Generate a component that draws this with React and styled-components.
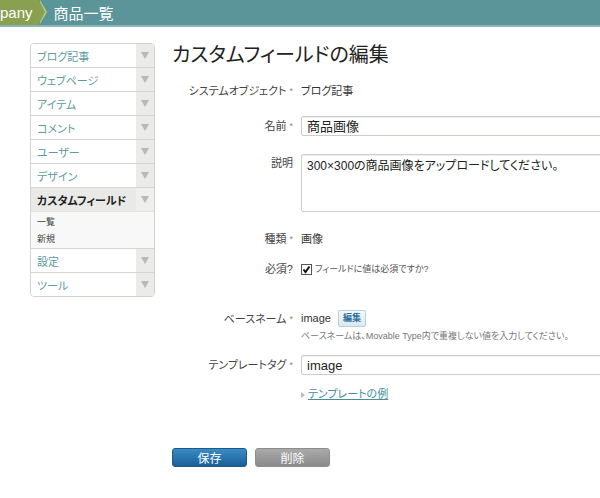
import React from 'react'
import styled, { createGlobalStyle } from 'styled-components'

const Global = createGlobalStyle`
  body {
    margin: 0;
    background: #fff;
    font-family: "Liberation Sans", "Noto Sans CJK JP", sans-serif;
    font-feature-settings: "palt";
    color: #333;
    overflow: hidden;
  }
`

const Page = styled.div`
  width: 600px;
  height: 498px;
  overflow: hidden;
`

const TopBar = styled.div`
  height: 25px;
  background: #5b9499;
  border-bottom: 2px solid #8bb5b8;
  display: flex;
  align-items: center;
`

const Crumb = styled.div`
  height: 25px;
  background: #88a04f;
  color: #fff;
  font-size: 15px;
  display: flex;
  align-items: center;
  position: relative;
  padding-right: 6px;
  &::after {
    content: '';
    position: absolute;
    right: -6px;
    top: 0;
    border-top: 12.5px solid transparent;
    border-bottom: 12.5px solid transparent;
    border-left: 6px solid #88a04f;
  }
  &::before {
    content: '';
    position: absolute;
    right: -8px;
    top: 0;
    border-top: 12.5px solid transparent;
    border-bottom: 12.5px solid transparent;
    border-left: 7px solid #b5c98c;
  }
`

const Current = styled.div`
  color: #fff;
  font-size: 15px;
  margin-left: 15px;
`

const Main = styled.div`
  display: flex;
  padding: 16px 0 0 30px;
`

const Side = styled.div`
  width: 123px;
  flex-shrink: 0;
  border: 1px solid #d4d2cc;
  border-radius: 4px;
  overflow: hidden;
  align-self: flex-start;
`

const Item = styled.div`
  display: flex;
  height: 23px;
  border-top: ${p => (p.first ? 'none' : '1px solid #d7d5d0')};
  background: ${p => (p.active ? '#e9e9e7' : '#fff')};
`

const ItemLabel = styled.div`
  flex: 1;
  display: flex;
  align-items: center;
  padding-left: 6px;
  font-size: 11px;
  color: ${p => (p.active ? '#222' : '#5c9ba0')};
  font-weight: ${p => (p.active ? 'bold' : 'normal')};
`

const Arrow = styled.div`
  width: 18px;
  background: ${p => (p.active ? '#efefed' : '#ebebe9')};
  display: flex;
  align-items: center;
  justify-content: center;
  &::after {
    content: '';
    border-left: 4px solid transparent;
    border-right: 4px solid transparent;
    border-top: 7px solid #b9b9b7;
  }
`

const Sub = styled.div`
  background: #f8f8f8;
  border-top: 1px solid #e3e2de;
  padding: 1px 0;
`

const SubItem = styled.div`
  font-size: 9px;
  color: #444;
  height: 17px;
  display: flex;
  align-items: center;
  padding-left: 6px;
`

const Content = styled.div`
  margin-left: 17px;
  flex: 1;
`

const Title = styled.h1`
  margin: 0;
  font-size: 20px;
  font-weight: normal;
  color: #222;
  line-height: 24px;
`

const Form = styled.div`
  display: grid;
  grid-template-columns: 121px 320px;
  column-gap: 8px;
  margin-top: 16px;
  line-height: 13px;
`

const Label = styled.div`
  text-align: right;
  font-size: 11px;
  color: #444;
  padding-top: ${p => p.pt || 0}px;
  margin-bottom: ${p => p.mb || 0}px;
`

const Star = styled.span`
  font-size: 9px;
  color: #888;
  margin-left: 3px;
  vertical-align: top;
`

const Value = styled.div`
  font-size: 11px;
  color: #333;
  padding-top: ${p => p.pt || 0}px;
  margin-bottom: ${p => p.mb || 0}px;
`

const TextInput = styled.div`
  height: 18px;
  border: 1px solid #cfcdc8;
  border-radius: 2px;
  font-size: 13px;
  color: #222;
  padding: 0 5px;
  display: flex;
  align-items: center;
  box-shadow: inset 0 1px 1px #eee;
  margin-bottom: ${p => p.mb || 0}px;
`

const TextArea = styled.div`
  height: 48px;
  border: 1px solid #cfcdc8;
  border-radius: 2px;
  font-size: 12px;
  line-height: 16px;
  color: #222;
  padding: 3px 5px 5px;
  box-shadow: inset 0 1px 1px #eee;
  margin-bottom: ${p => p.mb || 0}px;
`

const Check = styled.span`
  display: inline-flex;
  align-items: center;
  gap: 3px;
  font-size: 9px;
  color: #555;
  svg {
    display: block;
  }
`

const Inline = styled.div`
  display: flex;
  align-items: center;
  gap: 7px;
  font-size: 11px;
`

const SmallBtn = styled.span`
  font-size: 9px;
  line-height: 11px;
  color: #2a6f9e;
  font-weight: bold;
  border: 1px solid #b9cfdc;
  border-radius: 2px;
  background: linear-gradient(#f4f8fb, #dde8ef);
  padding: 2px 4px;
`

const Help = styled.div`
  font-size: 9px;
  color: #777;
  margin-top: 3px;
`

const Link = styled.div`
  font-size: 11px;
  color: #4a8d9a;
  display: flex;
  align-items: center;
  gap: 3px;
  span {
    text-decoration: underline;
  }
  &::before {
    content: '';
    border-top: 3px solid transparent;
    border-bottom: 3px solid transparent;
    border-left: 4px solid #bbb;
  }
`

const Buttons = styled.div`
  display: flex;
  gap: 8px;
  margin-top: 47px;
`

const Button = styled.div`
  width: 75px;
  height: 19px;
  border-radius: 3px;
  color: #fff;
  font-size: 12px;
  display: flex;
  align-items: center;
  justify-content: center;
  background: ${p =>
    p.primary
      ? 'linear-gradient(#3a8cc4, #1b5f98)'
      : 'linear-gradient(#aaa, #8a8a8a)'};
  border: 1px solid ${p => (p.primary ? '#1d5a8c' : '#8d8d8d')};
  box-sizing: border-box;
`

const nav = ['ブログ記事', 'ウェブページ', 'アイテム', 'コメント', 'ユーザー', 'デザイン']

export default function App() {
  return (
    <Page>
      <Global />
      <TopBar>
        <Crumb>pany</Crumb>
        <Current>商品一覧</Current>
      </TopBar>
      <Main>
        <Side>
          {nav.map((n, i) => (
            <Item key={n} first={i === 0}>
              <ItemLabel>{n}</ItemLabel>
              <Arrow />
            </Item>
          ))}
          <Item active>
            <ItemLabel active>カスタムフィールド</ItemLabel>
            <Arrow active />
          </Item>
          <Sub>
            <SubItem>一覧</SubItem>
            <SubItem>新規</SubItem>
          </Sub>
          <Item>
            <ItemLabel>設定</ItemLabel>
            <Arrow />
          </Item>
          <Item>
            <ItemLabel>ツール</ItemLabel>
            <Arrow />
          </Item>
        </Side>
        <Content>
          <Title>カスタムフィールドの編集</Title>
          <Form>
            <Label pt={2} mb={18}>システムオブジェクト<Star>*</Star></Label>
            <Value pt={2} mb={18}>ブログ記事</Value>

            <Label pt={4} mb={18}>名前<Star>*</Star></Label>
            <TextInput mb={18}>商品画像</TextInput>

            <Label pt={3} mb={21}>説明</Label>
            <TextArea mb={21}>300×300の商品画像をアップロードしてください。</TextArea>

            <Label mb={17}>種類<Star>*</Star></Label>
            <Value mb={17}>画像</Value>

            <Label mb={32}>必須?</Label>
            <Value mb={32}>
              <Check>
                <svg width="11" height="11" viewBox="0 0 11 11">
                  <rect x="0.5" y="0.5" width="10" height="10" fill="#fff" stroke="#555" />
                  <path d="M2.5 5.5 L4.5 8 L8.5 2.5" fill="none" stroke="#111" strokeWidth="2" />
                </svg>
                フィールドに値は必須ですか?
              </Check>
            </Value>

            <Label pt={3} mb={12}>ベースネーム<Star>*</Star></Label>
            <Value mb={12}>
              <Inline>
                image <SmallBtn>編集</SmallBtn>
              </Inline>
              <Help>ベースネームは、Movable Type内で重複しない値を入力してください。</Help>
            </Value>

            <Label pt={4} mb={13}>テンプレートタグ<Star>*</Star></Label>
            <TextInput mb={13}>image</TextInput>

            <div />
            <Link><span>テンプレートの例</span></Link>
          </Form>
          <Buttons>
            <Button primary>保存</Button>
            <Button>削除</Button>
          </Buttons>
        </Content>
      </Main>
    </Page>
  )
}
